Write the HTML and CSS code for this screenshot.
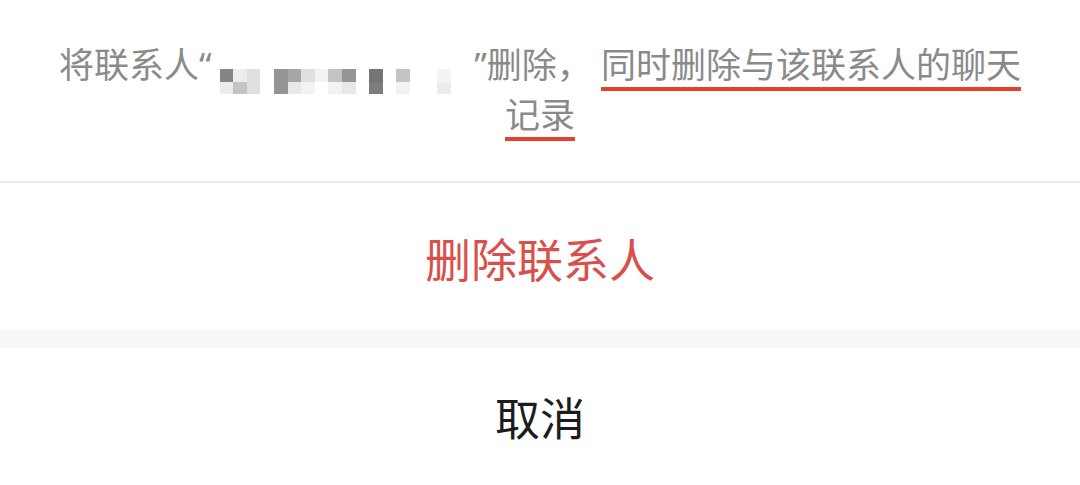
FILE: index.html
```html
<!DOCTYPE html>
<html lang="zh-CN">
<head>
<meta charset="utf-8">
<link rel="stylesheet" href="styles.css">
</head>
<body>
<div class="sheet">
  <div class="notice">
    <p class="msg">将联系人“<span class="name" aria-label="已打码"><i class="s3"></i><i class="s8"></i><i class="s8"></i><i class="s5"></i><i class="s7"></i><i class="s7"></i><i class="s0"></i><i class="s0"></i><i class="s4"></i><i class="s4"></i><i class="s11"></i><i class="s9"></i><i class="s7"></i><i class="s10"></i><i class="s10"></i><i class="s0"></i><i class="s5"></i><i class="s10"></i><i class="s4"></i><i class="s9"></i><i class="s0"></i><i class="s0"></i><i class="s1"></i><i class="s2"></i><i class="s0"></i><i class="s0"></i><i class="s5"></i><i class="s10"></i><i class="s0"></i><i class="s0"></i><i class="s0"></i><i class="s0"></i><i class="s10"></i><i class="s8"></i><i class="s0"></i><i class="s0"></i></span>”删除， <span class="mark">同时删除与该联系人的聊天记录</span></p>
  </div>
  <div class="action danger">删除联系人</div>
  <div class="gap"></div>
  <div class="action cancel">取消</div>
</div>
</body>
</html>
```
FILE: styles.css
```css
* { box-sizing: border-box; }
html, body { margin: 0; padding: 0; background: #ffffff; }
body {
  width: 1080px;
  height: 485px;
  overflow: hidden;
  font-family: "Noto Sans", "Noto Sans CJK SC", sans-serif;
}
.sheet { display: flex; flex-direction: column; }
.notice {
  height: 183px;
  padding: 44px 50px 0;
  border-bottom: 2px solid #ececec;
}
.msg {
  margin: 0;
  text-align: center;
  font-size: 35px;
  line-height: 41px;
  color: #8a8a8a;
}
.mark {
  text-decoration: underline;
  text-decoration-color: #e5412d;
  text-decoration-thickness: 4px;
  text-underline-offset: 9px;
}
.name {
  display: inline-grid;
  grid-template-columns: repeat(18, 13.6px);
  grid-template-rows: 13px 12px;
  grid-auto-flow: column;
  vertical-align: -4px;
  margin: 0 10px 0 8px;
}
.name i { display: block; }
.s0 { background: #ffffff; }
.s1 { background: #747474; }
.s2 { background: #7c7c7c; }
.s3 { background: #858585; }
.s4 { background: #959595; }
.s5 { background: #c4c4c4; }
.s6 { background: #d0d0d0; }
.s7 { background: #e0e0e0; }
.s8 { background: #ececec; }
.s9 { background: #e8e8e8; }
.s10 { background: #f3f3f3; }
.s11 { background: #a6a6a6; }
.action {
  display: flex;
  align-items: center;
  justify-content: center;
  font-size: 46px;
}
.danger { height: 147px; color: #d9504a; }
.gap { height: 18px; background: #f7f7f7; }
.cancel { height: 137px; color: #1c1c1c; font-size: 45px; }
```
